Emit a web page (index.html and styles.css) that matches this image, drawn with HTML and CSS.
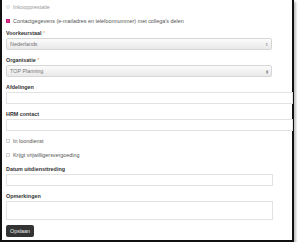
FILE: index.html
```html
<!DOCTYPE html>
<html lang="nl">
<head>
  <meta charset="UTF-8" />
  <meta name="viewport" content="width=device-width, initial-scale=1.0"/>
  <title>Profiel</title>
  <link rel="stylesheet" href="styles.css">
</head>
<body>
  <div class="panel">
    <form class="form">
      <div class="check-row faded">
        <span class="box round"></span>
        <span>Inkoopprestatie</span>
      </div>
      <div class="check-row last">
        <span class="box checked"></span>
        <span>Contactgegevens (e-mailadres en telefoonnummer) met collega's delen</span>
      </div>

      <div class="field">
        <label>Voorkeurstaal <span class="req">*</span></label>
        <div class="select">
          <span>Nederlands</span>
          <span class="arrows">&#8661;</span>
        </div>
      </div>

      <div class="field">
        <label>Organisatie <span class="req">*</span></label>
        <div class="select">
          <span>TOP Planning</span>
          <span class="arrows">&#9646;</span>
        </div>
      </div>

      <div class="field">
        <label>Afdelingen</label>
        <div class="input wide"></div>
      </div>

      <div class="field">
        <label>HRM contact</label>
        <div class="input wide"></div>
      </div>

      <div class="check-row">
        <span class="box"></span>
        <span>In loondienst</span>
      </div>
      <div class="check-row">
        <span class="box"></span>
        <span>Krijgt vrijwilligersvergoeding</span>
      </div>

      <div class="field">
        <label>Datum uitdiensttreding</label>
        <div class="input"></div>
      </div>

      <div class="field">
        <label>Opmerkingen</label>
        <div class="input area"></div>
      </div>

      <button type="button" class="btn">Opslaan</button>
    </form>
  </div>
</body>
</html>
```

FILE: styles.css
```css
* { box-sizing: border-box; }

body {
  margin: 0;
  background: #ffffff;
  font-family: 'Liberation Sans', Arial, sans-serif;
  font-size: 5.4px;
  color: #555;
}

.panel {
  width: 294px;
  height: 242px;
  border-left: 2px solid #111;
  border-right: 2px solid #111;
  border-bottom: 2px solid #111;
  box-shadow: 2px 2px 2px rgba(0, 0, 0, 0.25);
  padding: 4px 0 0 4px;
}

.check-row {
  display: flex;
  align-items: center;
  gap: 3px;
  height: 6px;
  line-height: 6px;
  margin-bottom: 8px;
}

.check-row.last { margin-bottom: 6px; }

.check-row.faded { color: #999; }

.box {
  width: 4px;
  height: 4px;
  border: 0.5px solid #d4d4d4;
  background: #fafafa;
  flex-shrink: 0;
}

.box.round {
  border-radius: 50%;
  border-color: #e0e0e0;
}

.box.checked {
  background: #e0308f;
  border-color: #c0207a;
}

.field { margin-bottom: 7px; }

.field label {
  display: block;
  font-weight: bold;
  color: #333;
  line-height: 6px;
  margin-bottom: 2px;
}

.req { color: #f0a060; font-weight: normal; }

.select {
  width: 266px;
  height: 12px;
  border: 0.5px solid #d6d6d6;
  border-radius: 2px;
  background: linear-gradient(to bottom, #fbfbfb, #e9e9e9);
  display: flex;
  align-items: center;
  justify-content: space-between;
  padding: 0 3px;
  color: #777;
}

.arrows {
  font-size: 4px;
  color: #888;
}

.input {
  width: 267px;
  height: 12px;
  border: 0.5px solid #e2e2e2;
  background: #fff;
}

.input.wide { width: 287px; }

.input.area { height: 19px; }

.btn {
  display: block;
  margin-top: -2px;
  height: 12px;
  padding: 0 4px;
  border: none;
  border-radius: 2px;
  background: #333;
  color: #eee;
  font-family: inherit;
  font-size: 5.4px;
}
```
